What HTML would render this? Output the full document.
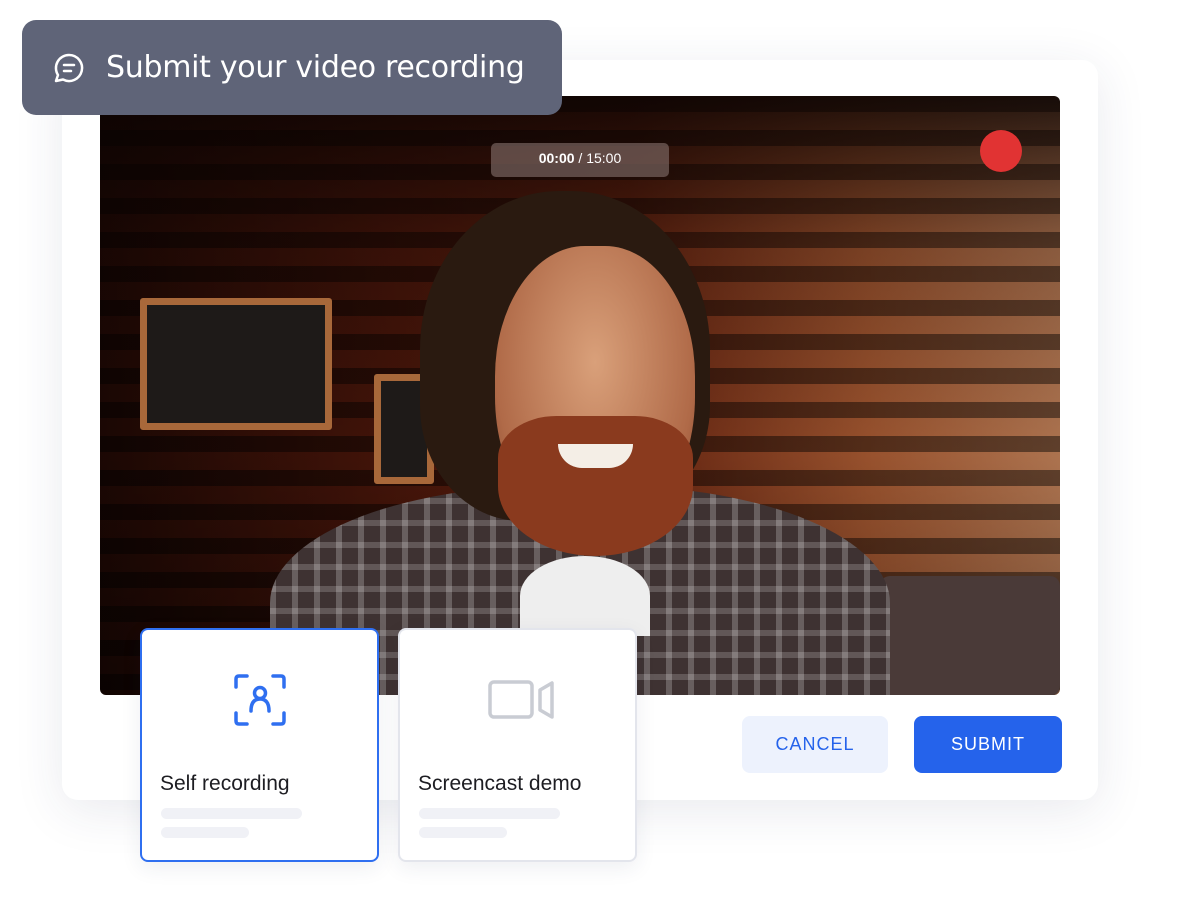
<!DOCTYPE html>
<html><head><style>
*{margin:0;padding:0;box-sizing:border-box}
body{width:1200px;height:900px;background:#fff;position:relative;overflow:hidden;font-family:"Liberation Sans",sans-serif}
.card{position:absolute;left:62px;top:60px;width:1036px;height:740px;background:#fff;border-radius:16px;box-shadow:0 10px 50px rgba(40,50,90,.10)}
.photo{position:absolute;left:100px;top:96px;width:960px;height:599px;border-radius:6px;overflow:hidden;
background:
linear-gradient(180deg,rgba(10,3,2,.85) 0%,rgba(10,3,2,.3) 25%,rgba(0,0,0,.1) 60%,rgba(0,0,0,.4) 100%),
repeating-linear-gradient(180deg,rgba(0,0,0,.45) 0 16px,rgba(0,0,0,0) 16px 34px),
linear-gradient(90deg,#1e0804 0%,#4a160a 30%,#6a2410 55%,#a85a32 80%,#c08058 100%);}
.frame{position:absolute;border:7px solid #a8683a;background:#1e1a18;border-radius:3px}
.hair{position:absolute;left:320px;top:95px;width:290px;height:330px;border-radius:48% 48% 35% 35%;background:#2a1a10}
.face{position:absolute;left:395px;top:150px;width:200px;height:290px;border-radius:45% 45% 48% 48%;background:radial-gradient(ellipse at 50% 40%,#d9a07a,#b06a48 70%,#7a3e28)}
.beard{position:absolute;left:398px;top:320px;width:195px;height:140px;border-radius:30% 30% 50% 50%;background:#8a3a1e}
.teeth{position:absolute;left:458px;top:348px;width:75px;height:24px;border-radius:0 0 40px 40px;background:#f4eee6}
.shirt{position:absolute;left:170px;top:390px;width:620px;height:260px;border-radius:45% 45% 0 0;
background:repeating-linear-gradient(90deg,rgba(255,255,255,.22) 0 6px,transparent 6px 22px),repeating-linear-gradient(0deg,rgba(255,255,255,.18) 0 6px,transparent 6px 22px),#3e3232}
.tee{position:absolute;left:420px;top:460px;width:130px;height:80px;border-radius:50% 50% 0 0;background:#eee}
.sofa{position:absolute;left:780px;top:480px;width:180px;height:120px;background:#4a3a38;border-radius:10px}
.title{position:absolute;left:22px;top:20px;width:540px;height:95px;background:#5f6478;border-radius:14px;color:#fff;display:flex;align-items:center;padding-left:84px;font-family:"DejaVu Sans","Liberation Sans",sans-serif;font-size:30px;letter-spacing:-0.3px}
.title svg{position:absolute;left:30px;top:31px}
.timer{position:absolute;left:491px;top:143px;width:178px;height:34px;background:rgba(120,100,95,.7);border-radius:5px;color:#fff;font-size:14px;text-align:center;line-height:30px}
.dot{position:absolute;left:980px;top:130px;width:42px;height:42px;border-radius:50%;background:#e13333}
.opt{position:absolute;top:628px;width:239px;height:234px;background:#fff;border-radius:8px;border:2px solid #e3e5ec;box-shadow:0 6px 20px rgba(40,50,90,.08)}
.opt.sel{border-color:#2f6ff0}
.opt h3{position:absolute;left:18px;top:142px;font-size:21px;font-weight:normal;color:#1d1d22}
.bar{position:absolute;left:19px;height:11px;border-radius:6px;background:#f0f1f6}
.btn{position:absolute;top:716px;height:57px;border-radius:8px;font-size:18px;letter-spacing:1px;display:flex;align-items:center;justify-content:center}
</style></head><body>
<div class="card"></div>
<div class="photo">
 <div class="frame" style="left:40px;top:202px;width:192px;height:132px"></div>
 <div class="frame" style="left:274px;top:278px;width:60px;height:110px"></div>
 <div class="sofa"></div>
 <div class="shirt"></div>
 <div class="tee"></div>
 <div class="hair"></div>
 <div class="face"></div>
 <div class="beard"></div>
 <div class="teeth"></div>
</div>
<div class="timer"><b>00:00</b> / 15:00</div>
<div class="dot"></div>
<div class="title"><svg width="34" height="34" viewBox="0 0 34 34"><path d="M17 4a13 13 0 1 1-6 24.5L4 30l2-6A13 13 0 0 1 17 4z" fill="none" stroke="#fff" stroke-width="2.5" stroke-linejoin="round"/><path d="M12 14h10M12 20h7" stroke="#fff" stroke-width="2.5" stroke-linecap="round"/></svg>Submit your video recording</div>
<div class="opt sel" style="left:140px">
 <svg style="position:absolute;left:91px;top:43px" width="54" height="54" viewBox="0 0 54 54" fill="none" stroke="#2f6ff0" stroke-width="3.5" stroke-linecap="round" stroke-linejoin="round"><path d="M3 14V6q0-3 3-3h8M40 3h8q3 0 3 3v8M51 40v8q0 3-3 3h-8M14 51H6q-3 0-3-3v-8"/><circle cx="27" cy="20" r="5.5"/><path d="M18 38q0-12 9-12t9 12"/></svg>
 <h3>Self recording</h3>
 <div class="bar" style="top:178px;width:141px"></div><div class="bar" style="top:197px;width:88px"></div>
</div>
<div class="opt" style="left:398px">
 <svg style="position:absolute;left:88px;top:50px" width="68" height="40" viewBox="0 0 68 40" fill="none" stroke="#c9ccd3" stroke-width="3.5" stroke-linejoin="round"><rect x="2" y="2" width="42" height="35" rx="4"/><path d="M52 10l12-7v34l-12-7z"/></svg>
 <h3>Screencast demo</h3>
 <div class="bar" style="top:178px;width:141px"></div><div class="bar" style="top:197px;width:88px"></div>
</div>
<div class="btn" style="left:742px;width:146px;background:#edf2fd;color:#2563eb">CANCEL</div>
<div class="btn" style="left:914px;width:148px;background:#2563eb;color:#fff">SUBMIT</div>
</body></html>
